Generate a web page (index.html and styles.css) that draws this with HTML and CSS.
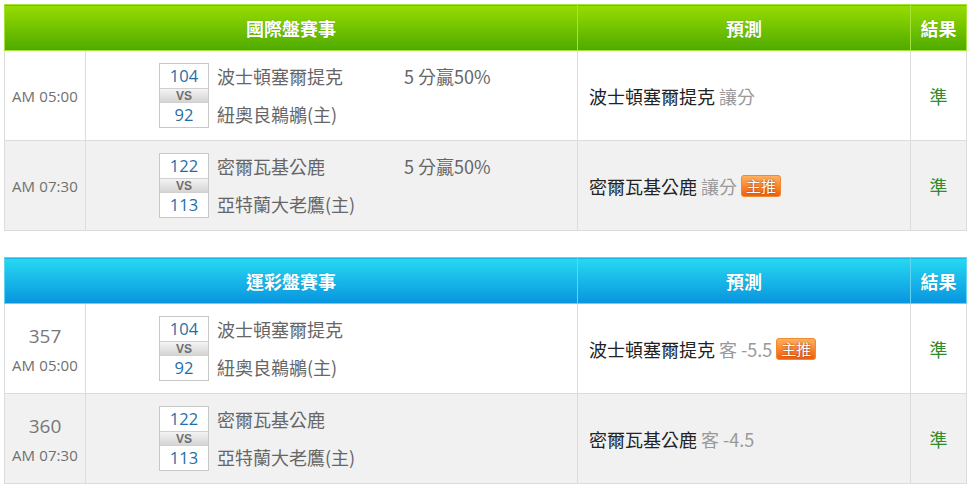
FILE: index.html
```html
<!DOCTYPE html>
<html lang="zh-Hant">
<head>
<meta charset="utf-8">
<title>賽事預測</title>
<link rel="stylesheet" href="styles.css">
</head>
<body>
<div class="page">
  <table class="board board-green">
    <colgroup><col class="c-time"><col class="c-match"><col class="c-pred"><col class="c-res"></colgroup>
    <thead>
      <tr><th colspan="2">國際盤賽事</th><th>預測</th><th>結果</th></tr>
    </thead>
    <tbody>
      <tr class="row-white">
        <td class="time"><div class="clock">AM 05:00</div></td>
        <td class="match">
          <div class="match-inner">
            <div class="score"><div class="num">104</div><div class="vs">VS</div><div class="num">92</div></div>
            <div class="teams"><div class="team">波士頓塞爾提克</div><div class="team">紐奧良鵜鶘(主)</div></div>
            <div class="line">5 分贏50%</div>
          </div>
        </td>
        <td class="pred">波士頓塞爾提克 <span class="muted">讓分</span></td>
        <td class="res">準</td>
      </tr>
      <tr class="row-grey">
        <td class="time"><div class="clock">AM 07:30</div></td>
        <td class="match">
          <div class="match-inner">
            <div class="score"><div class="num">122</div><div class="vs">VS</div><div class="num">113</div></div>
            <div class="teams"><div class="team">密爾瓦基公鹿</div><div class="team">亞特蘭大老鷹(主)</div></div>
            <div class="line">5 分贏50%</div>
          </div>
        </td>
        <td class="pred">密爾瓦基公鹿 <span class="muted">讓分</span> <span class="badge">主推</span></td>
        <td class="res">準</td>
      </tr>
    </tbody>
  </table>

  <table class="board board-blue">
    <colgroup><col class="c-time"><col class="c-match"><col class="c-pred"><col class="c-res"></colgroup>
    <thead>
      <tr><th colspan="2">運彩盤賽事</th><th>預測</th><th>結果</th></tr>
    </thead>
    <tbody>
      <tr class="row-white">
        <td class="time"><div class="code">357</div><div class="clock">AM 05:00</div></td>
        <td class="match">
          <div class="match-inner">
            <div class="score"><div class="num">104</div><div class="vs">VS</div><div class="num">92</div></div>
            <div class="teams"><div class="team">波士頓塞爾提克</div><div class="team">紐奧良鵜鶘(主)</div></div>
          </div>
        </td>
        <td class="pred">波士頓塞爾提克 <span class="muted">客 -5.5</span> <span class="badge">主推</span></td>
        <td class="res">準</td>
      </tr>
      <tr class="row-grey">
        <td class="time"><div class="code">360</div><div class="clock">AM 07:30</div></td>
        <td class="match">
          <div class="match-inner">
            <div class="score"><div class="num">122</div><div class="vs">VS</div><div class="num">113</div></div>
            <div class="teams"><div class="team">密爾瓦基公鹿</div><div class="team">亞特蘭大老鷹(主)</div></div>
          </div>
        </td>
        <td class="pred">密爾瓦基公鹿 <span class="muted">客 -4.5</span></td>
        <td class="res">準</td>
      </tr>
    </tbody>
  </table>
</div>
</body>
</html>
```

FILE: styles.css
```css
* { box-sizing: border-box; }
html, body { margin: 0; padding: 0; background: #fff; }
body {
  font-family: "Open Sans", "Noto Sans CJK TC", sans-serif;
  color: #555;
}
.page {
  padding: 4px 5px 0 4px;
  display: flex;
  flex-direction: column;
  gap: 26px;
}
.board {
  width: 962px;
  border-collapse: collapse;
  table-layout: fixed;
}
.c-time { width: 81px; }
.c-match { width: 492px; }
.c-pred { width: 333px; }
.c-res { width: 56px; }

.board th {
  height: 46px;
  padding: 0;
  color: #fff;
  font-family: "Noto Sans CJK TC", sans-serif;
  font-size: 18px;
  font-weight: bold;
  text-align: center;
  vertical-align: middle;
  text-shadow: 0 0 1px rgba(0,0,0,0.2);
}
.board-green th {
  background: linear-gradient(#97dc00, #4eaa00);
  border: 1px solid #a6e33a;
}
.board-blue th {
  background: linear-gradient(#27d9f2, #0894de);
  border: 1px solid #5fd4f4;
}
.board td {
  border: 1px solid #dcdcdc;
  padding: 0;
  vertical-align: middle;
}
.row-white td { background: #fff; }
.row-grey td { background: #f1f1f1; }
.board tbody tr { height: 90px; }

.time { text-align: center; color: #707070; }
.clock { font-size: 15px; line-height: 20px; letter-spacing: 0.1px; }
.code { font-size: 19px; line-height: 26px; margin-bottom: 6px; color: #777; }

.match-inner {
  display: flex;
  align-items: flex-start;
  padding-left: 73px;
}
.score {
  width: 50px;
  border: 1px solid #c8c8c8;
  display: flex;
  flex-direction: column;
  background: #fff;
}
.num {
  height: 24px;
  line-height: 24px;
  text-align: center;
  font-size: 16.5px;
  color: #1f6ea8;
}
.vs {
  height: 15px;
  line-height: 14px;
  text-align: center;
  font-family: "Liberation Sans", sans-serif;
  font-size: 12px;
  font-weight: bold;
  color: #6e6e6e;
  background: linear-gradient(#f4f4f4, #d4d4d4);
  border-top: 1px solid #d0d0d0;
  border-bottom: 1px solid #d0d0d0;
}
.teams {
  width: 195px;
  padding-left: 8px;
  display: flex;
  flex-direction: column;
}
.team, .line {
  font-family: "Noto Sans CJK TC", sans-serif;
  font-size: 18px;
  line-height: 26px;
  color: #666;
  white-space: nowrap;
}
.teams .team + .team { margin-top: 12px; }

.pred {
  padding-left: 11px !important;
  font-family: "Noto Sans CJK TC", sans-serif;
  font-size: 18px;
  color: #222;
  white-space: nowrap;
}
.muted { color: #999; }
.badge {
  display: inline-block;
  vertical-align: 2px;
  height: 22px;
  line-height: 20px;
  padding: 0 4px;
  font-size: 15px;
  color: #fff;
  border: 1px solid #f2892a;
  border-radius: 3px;
  background: linear-gradient(#ffb060, #f0600c);
  text-shadow: 0 0 2px rgba(120,40,0,0.9);
}
.res {
  text-align: center;
  font-family: "Noto Sans CJK TC", sans-serif;
  font-size: 18px;
  color: #2e8b2e;
}
```
